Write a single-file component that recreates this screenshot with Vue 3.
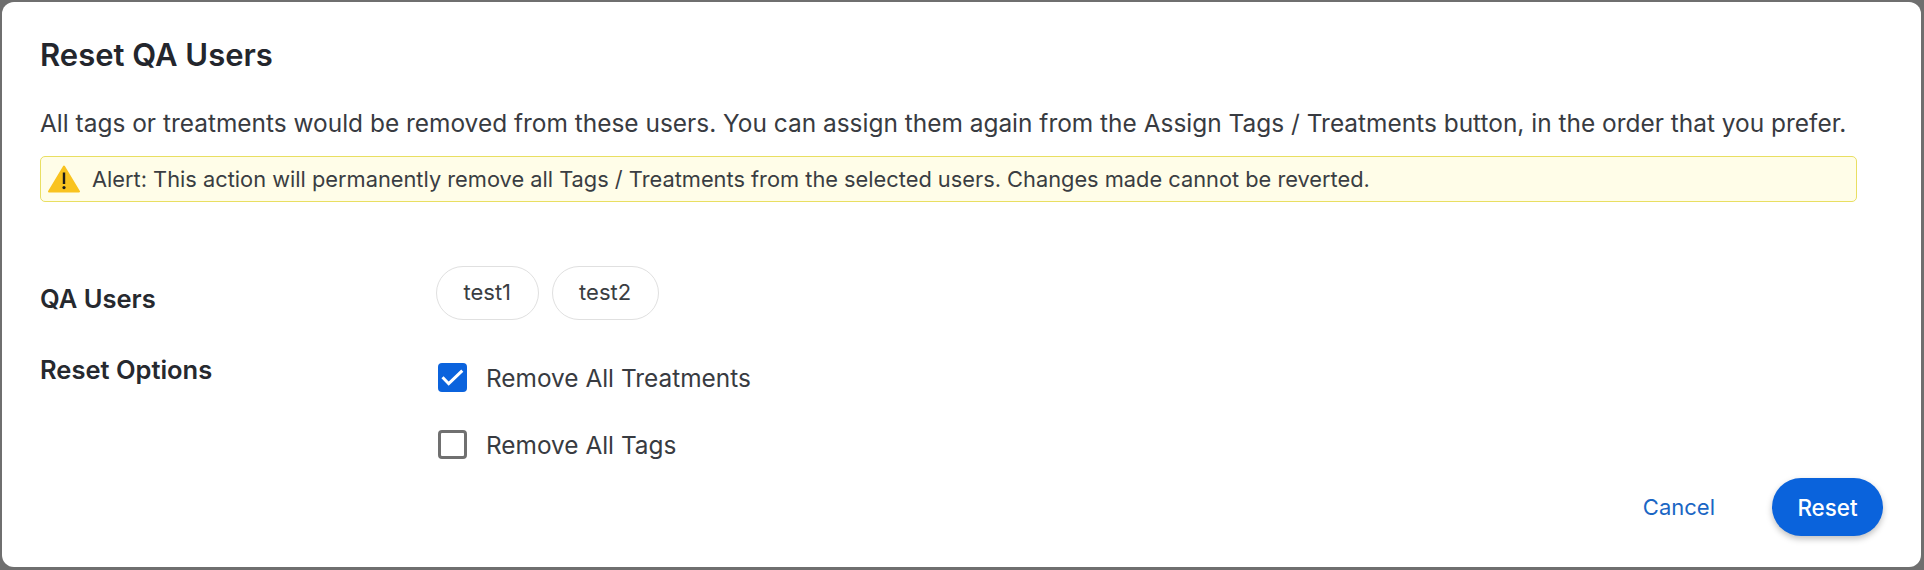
<script setup>
const users = ['test1', 'test2']
const options = [
  { label: 'Remove All Treatments', checked: true },
  { label: 'Remove All Tags', checked: false }
]
</script>

<template>
  <div class="page">
    <section class="dialog">
      <h1 class="title">Reset QA Users</h1>
      <p class="intro">All tags or treatments would be removed from these users. You can assign them again from the Assign Tags / Treatments button, in the order that you prefer.</p>
      <div class="alert">
        <svg class="alert-icon" viewBox="0 0 32 28" width="32" height="28" aria-hidden="true">
          <path d="M16 1.5 L31 26.5 H1 Z" fill="#f9c31f" stroke="#f9c31f" stroke-width="2" stroke-linejoin="round" />
          <path d="M16 7.5 V19" stroke="#1c1c1c" stroke-width="2.4" fill="none" />
          <circle cx="16" cy="22.6" r="1.6" fill="#1c1c1c" />
        </svg>
        <span class="alert-text">Alert: This action will permanently remove all Tags / Treatments from the selected users. Changes made cannot be reverted.</span>
      </div>
      <div class="form">
        <div class="label label-users">QA Users</div>
        <div class="chips">
          <span v-for="u in users" :key="u" class="chip">{{ u }}</span>
        </div>
        <div class="label label-options">Reset Options</div>
        <div class="options">
          <label v-for="o in options" :key="o.label" class="option">
            <span class="box" :class="{ checked: o.checked }">
              <svg v-if="o.checked" viewBox="0 0 29 29" width="29" height="29" aria-hidden="true">
                <path d="M4.5 14.3 L10.7 20.7 L24.3 7.7" fill="none" stroke="#fff" stroke-width="3" />
              </svg>
            </span>
            <span class="option-text">{{ o.label }}</span>
          </label>
        </div>
      </div>
      <footer class="actions">
        <button class="btn-cancel" type="button">Cancel</button>
        <button class="btn-reset" type="button">Reset</button>
      </footer>
    </section>
  </div>
</template>

<style>
html, body { margin: 0; background: #6f6f6f; }
</style>

<style scoped>
.page {
  box-sizing: border-box;
  width: 1924px;
  height: 570px;
  padding: 2px 3px 3px 2px;
  background: #6f6f6f;
  font-family: Inter, "Liberation Sans", sans-serif;
}
.dialog {
  box-sizing: border-box;
  height: 100%;
  display: flex;
  flex-direction: column;
  padding: 0 38px 0 38px;
  background: #fff;
  border-radius: 12px;
}
.title {
  margin: 35px 0 0;
  font-size: 31px;
  line-height: 36px;
  font-weight: 600;
  color: #23262d;
}
.intro {
  margin: 35px 0 0;
  font-size: 24.45px;
  line-height: 30px;
  font-weight: 400;
  color: #383b41;
  white-space: nowrap;
}
.alert {
  box-sizing: border-box;
  display: flex;
  align-items: center;
  gap: 12px;
  width: 1817px;
  height: 46px;
  margin-top: 18px;
  padding: 0 0 0 7px;
  background: #fffde8;
  border: 1.5px solid #e9df62;
  border-radius: 5px;
}
.alert-icon { flex: none; }
.alert-text {
  font-size: 21.8px;
  color: #3a3d42;
  white-space: nowrap;
}
.form {
  display: grid;
  grid-template-columns: 396px auto;
  grid-template-rows: 54px auto;
  row-gap: 43px;
  margin-top: 64px;
}
.label {
  font-size: 25.5px;
  line-height: 30px;
  font-weight: 600;
  color: #26292f;
}
.label-users { padding-top: 18px; }
.label-options { margin-top: -8px; }
.chips {
  display: flex;
  gap: 13px;
}
.chip {
  box-sizing: border-box;
  display: flex;
  align-items: center;
  justify-content: center;
  height: 54px;
  padding: 0 26.5px 2px;
  border: 1px solid #e0e0e0;
  border-radius: 27px;
  font-size: 22px;
  color: #3a3d42;
}
.options {
  display: flex;
  flex-direction: column;
  gap: 38px;
  padding-left: 2px;
}
.option {
  display: flex;
  align-items: center;
  gap: 19px;
  height: 29px;
}
.box {
  box-sizing: border-box;
  width: 29px;
  height: 29px;
  flex: none;
  border: 3px solid #707070;
  border-radius: 4px;
  background: #fff;
}
.box.checked {
  border: 0;
  background: #0b63dd;
}
.box svg { display: block; }
.option-text {
  font-size: 24.4px;
  color: #383b41;
}
.actions {
  display: flex;
  align-items: center;
  justify-content: flex-end;
  gap: 57px;
  margin-top: auto;
  margin-bottom: 31px;
}
.btn-cancel {
  padding: 0;
  border: 0;
  background: none;
  font: inherit;
  font-size: 22px;
  color: #1a66c4;
}
.btn-reset {
  width: 111px;
  height: 58px;
  border: 0;
  border-radius: 29px;
  background: #0a63dc;
  font: inherit;
  font-size: 22.4px;
  font-weight: 500;
  color: #fff;
  box-shadow: 0 3px 6px rgba(0, 0, 0, 0.25);
}
</style>
